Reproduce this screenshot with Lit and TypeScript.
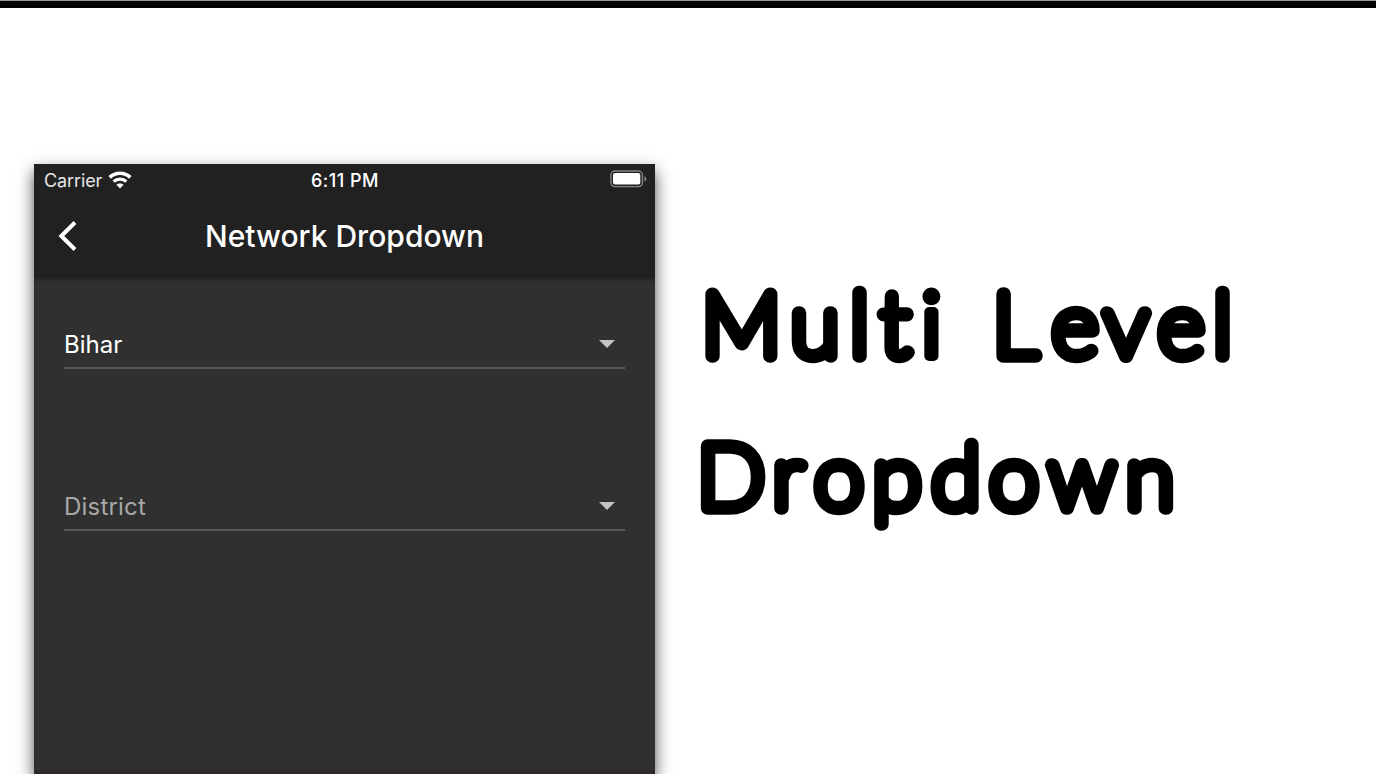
import { html, LitElement, css, CSSResultArray, TemplateResult } from "lit";
import { customElement, property } from "lit/decorators.js";

@customElement("status-bar")
export class StatusBar extends LitElement {

  /** Network operator name. */
  @property({ type: String })
  carrier: string = "Carrier";

  /** Clock text. */
  @property({ type: String })
  time: string = "";

  static get styles(): CSSResultArray {
    return [
      css`
        :host {
          display: grid;
          grid-template-columns: 1fr auto 1fr;
          align-items: center;
          height: 32px;
          padding: 0 9px 0 10px;
          color: #fff;
          font-size: 18px;
          line-height: 30px;
        }

        .network {
          display: flex;
          align-items: center;
          gap: 6px;
        }

        .carrier {
          padding-top: 1px;
          color: #e6e6e6;
          letter-spacing: -0.1px;
        }

        .time {
          padding-top: 1px;
          font-weight: 500;
          letter-spacing: 0.5px;
        }

        .battery {
          justify-self: end;
          margin: 0 -1px 2px 0;
        }

        .wifi {
          margin-bottom: 1px;
        }

        svg {
          display: block;
        }
      `
    ];
  }

  render(): TemplateResult {
    return html`
      <div class="network">
        <span class="carrier">${this.carrier}</span>
        <svg class="wifi" width="24" height="18" viewBox="0 0 24 18" fill="none" stroke="#fff" stroke-width="3.6">
          <path d="M1.7 6.4C7.5 .9 16.5 .9 22.3 6.4" />
          <path d="M5.7 10.5c3.6-3.3 9-3.3 12.6 0" stroke-width="3.2" />
          <path d="M12 17.4l-3.6-3.6c2-1.8 5.2-1.8 7.2 0z" fill="#fff" stroke="none" />
        </svg>
      </div>
      <div class="time">${this.time}</div>
      <svg class="battery" width="37" height="18" viewBox="0 0 37 18">
        <rect x=".9" y="1" width="31.5" height="15.6" rx="4" fill="none" stroke="#858585" stroke-width="1.4" />
        <rect x="3" y="3.1" width="27.3" height="11.4" rx="2" fill="#fff" />
        <path d="M34.4 6.2c2.6 1 2.6 4.5 0 5.5z" fill="#858585" />
      </svg>
    `;
  }
}

@customElement("dropdown-field")
export class DropdownField extends LitElement {

  /** Selected value. */
  @property({ type: String })
  value: string = "";

  /** Hint shown while nothing is selected. */
  @property({ type: String })
  hint: string = "";

  static get styles(): CSSResultArray {
    return [
      css`
        :host {
          display: flex;
          align-items: center;
          justify-content: space-between;
          box-sizing: border-box;
          height: 50px;
          padding: 2px 10px 0 0;
          border-bottom: 2px solid #5a5a5a;
          font-size: 24px;
          color: #fff;
        }

        .hint {
          color: #a8a8a8;
          letter-spacing: 0.2px;
        }

        .arrow {
          display: block;
        }
      `
    ];
  }

  render(): TemplateResult {
    return html`
      ${this.value
        ? html`<span class="value">${this.value}</span>`
        : html`<span class="hint">${this.hint}</span>`}
      <svg class="arrow" width="16" height="8" viewBox="0 0 16 8">
        <path d="M0 0h16L8 8z" fill="#c4c4c4" />
      </svg>
    `;
  }
}

@customElement("app-root")
export class AppRoot extends LitElement {

  static get styles(): CSSResultArray {
    return [
      css`
        :host {
          display: flex;
          flex-direction: column;
          box-sizing: border-box;
          width: 100%;
          height: 100vh;
          overflow: hidden;
          background: #fff;
          font-family: Inter, "Liberation Sans", sans-serif;
        }

        .rule {
          flex: none;
          height: 7px;
          border-top: 1px solid #999;
          background: #000;
        }

        .slide {
          display: flex;
          flex: 1;
          min-height: 0;
          padding: 156px 0 0 34px;
        }

        .phone {
          display: flex;
          flex-direction: column;
          flex: none;
          width: 621px;
          overflow: hidden;
          background: #303030;
          box-shadow: 0 7px 15px rgba(0, 0, 0, 0.7);
        }

        .header {
          flex: none;
          height: 114px;
          background: #212121;
          box-shadow: 0 1px 5px rgba(0, 0, 0, 0.35);
        }

        .toolbar {
          display: grid;
          grid-template-columns: 60px 1fr 60px;
          align-items: center;
          height: 82px;
          padding-bottom: 2px;
          box-sizing: border-box;
        }

        .back {
          display: block;
          margin-left: 22.5px;
        }

        .title {
          text-align: center;
          color: #fff;
          font-size: 30px;
          font-weight: 500;
          letter-spacing: 0.02px;
        }

        .form {
          display: flex;
          flex-direction: column;
          flex: 1;
          gap: 112px;
          padding: 41px 30px 0;
        }

        .footer {
          flex: none;
          height: 4px;
          background: #2e282a;
        }

        .headline {
          flex: none;
          margin: 92px 0 0 25px;
        }

        .lettering {
          display: block;
          font-family: Lato, sans-serif;
          font-weight: 100;
          font-size: 89px;
          text-anchor: middle;
          stroke: #000;
          stroke-width: 13.5px;
          stroke-linejoin: round;
        }

        .dotted {
          font-weight: 300;
          stroke-width: 10px;
        }
      `
    ];
  }

  render(): TemplateResult {
    return html`
      <div class="rule"></div>
      <main class="slide">
        <section class="phone">
          <div class="header">
            <status-bar carrier="Carrier" time="6:11 PM"></status-bar>
            <div class="toolbar">
              <svg class="back" width="22" height="32" viewBox="0 0 22 32" fill="none" stroke="#fff" stroke-width="4">
                <path d="M18 2.5L4.3 16 18 29.5" />
              </svg>
              <div class="title">Network Dropdown</div>
            </div>
          </div>
          <div class="form">
            <dropdown-field value="Bihar"></dropdown-field>
            <dropdown-field hint="District"></dropdown-field>
          </div>
          <div class="footer"></div>
        </section>
        <div class="headline">
          <svg class="lettering" width="580" height="310" viewBox="0 0 580 310">
            <text y="100" x="61.5 135 179.5 215 251.5 297 335 395 446 501 542.5">Mult<tspan class="dotted">i</tspan> Level</text>
            <text y="251.5" x="51 108 159 217 276 334 402 470">Dropdown</text>
          </svg>
        </div>
      </main>
    `;
  }
}
